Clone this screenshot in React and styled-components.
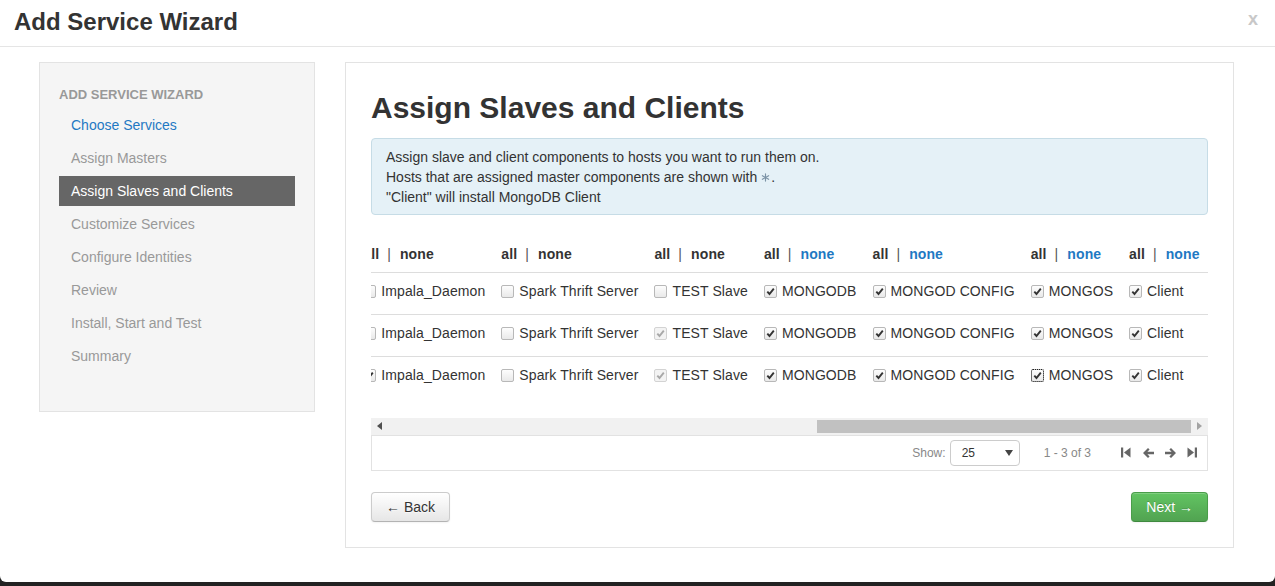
import React, { useLayoutEffect, useRef, useState } from 'react';
import styled, { createGlobalStyle } from 'styled-components';

const GlobalStyle = createGlobalStyle`
  html, body {
    margin: 0;
    padding: 0;
    height: 100%;
    background: #222;
  }
  body {
    font-family: "Liberation Sans", Arial, sans-serif;
    font-size: 14px;
    color: #333;
  }
`;

const Modal = styled.div`
  height: 582px;
  background: #fff;
  border-radius: 0 0 6px 6px;
  overflow: hidden;
`;

const ModalHeader = styled.div`
  height: 47px;
  box-sizing: border-box;
  display: flex;
  align-items: center;
  justify-content: space-between;
  padding: 0 17px 3px 14px;
  border-bottom: 1px solid #e5e5e5;
`;

const ModalTitle = styled.h3`
  margin: 0;
  font-size: 24px;
  line-height: 30px;
  font-weight: bold;
  color: #333;
`;

const Close = styled.span`
  font-size: 18px;
  font-weight: bold;
  line-height: 1;
  color: #c8c8c8;
  margin-bottom: 5px;
  cursor: pointer;
`;

const ModalBody = styled.div`
  display: grid;
  grid-template-columns: 276px minmax(0, 1fr);
  column-gap: 30px;
  align-items: start;
  padding: 15px 41px 0 39px;
`;

const Sidebar = styled.div`
  height: 350px;
  box-sizing: border-box;
  background: #f5f5f5;
  border: 1px solid #e3e3e3;
  padding: 22px 19px 0;
`;

const SidebarHeader = styled.div`
  font-size: 13px;
  font-weight: bold;
  line-height: 20px;
  color: #999;
  text-transform: uppercase;
  margin-bottom: 5px;
`;

const NavList = styled.div`
  display: flex;
  flex-direction: column;
  gap: 3px;
`;

const NavItem = styled.div`
  height: 30px;
  line-height: 30px;
  padding: 0 12px;
  font-size: 14px;
  color: ${(p) => (p.$active ? '#fff' : p.$done ? '#1f79c3' : '#999')};
  background: ${(p) => (p.$active ? '#666' : 'transparent')};
  cursor: ${(p) => (p.$done ? 'pointer' : 'default')};
`;

const Main = styled.div`
  min-width: 0;
  border: 1px solid #e3e3e3;
  padding: 25px;
`;

const PageTitle = styled.h2`
  margin: 0 0 10px;
  font-size: 30px;
  line-height: 40px;
  font-weight: bold;
  color: #333;
`;

const Alert = styled.div`
  background: #e5f1f7;
  border: 1px solid #c6dce6;
  border-radius: 4px;
  padding: 8px 14px 7px;
  line-height: 20px;
  color: #333;
  margin-bottom: 20px;
`;

const Scroller = styled.div`
  overflow: hidden;
`;

const Table = styled.table`
  border-collapse: collapse;
  white-space: nowrap;
  letter-spacing: 0.1px;
`;

const Th = styled.th`
  height: 37px;
  padding: 0 8px;
  text-align: left;
  vertical-align: middle;
  font-weight: bold;
  line-height: 20px;
`;

const Td = styled.td`
  height: 42px;
  box-sizing: border-box;
  border-top: 1px solid #ddd;
  padding: 0 8px 5px;
  line-height: 20px;
  vertical-align: middle;
`;

const HeadLink = styled.span`
  color: ${(p) => (p.$link ? '#1f79c3' : '#333')};
  cursor: ${(p) => (p.$link ? 'pointer' : 'default')};
`;

const Sep = styled.span`
  font-weight: normal;
  color: #555;
  margin: 0 9px 0 8px;
`;

const CheckLabel = styled.label`
  display: flex;
  align-items: center;
  height: 20px;
  gap: 5px;
  color: #333;
`;

const Box = styled.span`
  width: 13px;
  height: 13px;
  box-sizing: border-box;
  flex-shrink: 0;
  display: inline-flex;
  align-items: center;
  justify-content: center;
  border: 1px solid ${(p) => (p.$disabled ? '#d3d3d3' : '#b8b8b8')};
  border-radius: 2px;
  background: ${(p) => (p.$disabled ? '#f3f3f3' : 'linear-gradient(#fdfdfd, #e9e9e9)')};
  outline: ${(p) => (p.$focus ? '1px dotted #222' : 'none')};
  outline-offset: -1px;
`;

const ScrollBar = styled.div`
  display: flex;
  height: 17px;
  background: #f1f1f1;
  margin-top: 19px;
`;

const ScrollArrow = styled.div`
  width: 17px;
  display: flex;
  align-items: center;
  justify-content: center;
`;

const ScrollTrack = styled.div`
  flex: 1;
  display: flex;
  align-items: center;
  justify-content: flex-end;
`;

const ScrollThumb = styled.div`
  height: 13px;
  background: #c1c1c1;
`;

const Footer = styled.div`
  height: 36px;
  box-sizing: border-box;
  border: 1px solid #e2e2e2;
  display: flex;
  align-items: center;
  justify-content: flex-end;
  padding-right: 9px;
  font-size: 12px;
  color: #888;
`;

const ShowLabel = styled.span`
  margin-right: 4px;
`;

const Select = styled.div`
  width: 70px;
  height: 26px;
  box-sizing: border-box;
  border: 1px solid #ccc;
  border-radius: 4px;
  display: flex;
  align-items: center;
  justify-content: space-between;
  padding: 0 6px 0 11px;
  color: #333;
  font-size: 12px;
  background: #fff;
`;

const Range = styled.span`
  margin: 0 29px 0 24px;
`;

const PagerIcons = styled.div`
  display: flex;
  gap: 10px;
`;

const PagerIcon = styled.span`
  width: 12px;
  height: 12px;
  display: inline-flex;
  align-items: center;
  justify-content: center;
  color: #666;
  cursor: pointer;
`;

const Actions = styled.div`
  display: flex;
  justify-content: space-between;
  margin-top: 21px;
`;

const Button = styled.button`
  height: 30px;
  padding: 0 14px;
  font-family: "Liberation Sans", Arial, sans-serif;
  font-size: 14px;
  border-radius: 4px;
  cursor: pointer;
  border: 1px solid ${(p) => (p.$success ? '#4a9d4a' : '#ccc')};
  border-bottom-color: ${(p) => (p.$success ? '#3f8a3f' : '#b3b3b3')};
  color: ${(p) => (p.$success ? '#fff' : '#333')};
  background: ${(p) =>
    p.$success ? 'linear-gradient(#62c462, #51a351)' : 'linear-gradient(#fff, #e6e6e6)'};
  text-shadow: ${(p) => (p.$success ? '0 -1px 0 rgba(0,0,0,0.2)' : '0 1px 1px rgba(255,255,255,0.75)')};
  box-shadow: inset 0 1px 0 rgba(255, 255, 255, 0.2), 0 1px 2px rgba(0, 0, 0, 0.05);
`;

const steps = [
  'Choose Services',
  'Assign Masters',
  'Assign Slaves and Clients',
  'Customize Services',
  'Configure Identities',
  'Review',
  'Install, Start and Test',
  'Summary',
];

const hosts = ['c6401.ambari.apache.org', 'c6402.ambari.apache.org', 'c6403.ambari.apache.org'];

// c = checked, d = checked + disabled, u = unchecked, f = checked with focus
const columns = [
  { name: 'DataNode', link: true, cells: ['c', 'c', 'c'] },
  { name: 'NodeManager', link: true, cells: ['c', 'c', 'c'] },
  { name: 'RegionServer', link: true, cells: ['u', 'c', 'c'] },
  { name: 'NFSGateway', link: false, cells: ['u', 'u', 'u'] },
  { name: 'Supervisor', link: true, cells: ['c', 'u', 'u'] },
  { name: 'Flume', link: false, cells: ['u', 'u', 'u'] },
  { name: 'Kafka Broker', link: true, cells: ['u', 'u', 'c'] },
  { name: 'Impala_Daemon', link: false, cells: ['u', 'u', 'c'] },
  { name: 'Spark Thrift Server', link: false, cells: ['u', 'u', 'u'] },
  { name: 'TEST Slave', link: false, cells: ['u', 'd', 'd'] },
  { name: 'MONGODB', link: true, cells: ['c', 'c', 'c'] },
  { name: 'MONGOD CONFIG', link: true, cells: ['c', 'c', 'c'] },
  { name: 'MONGOS', link: true, cells: ['c', 'c', 'f'] },
  { name: 'Client', link: true, cells: ['c', 'c', 'c'] },
];

const Check = ({ state }) => {
  const checked = state !== 'u';
  const disabled = state === 'd';
  return (
    <Box $disabled={disabled} $focus={state === 'f'}>
      {checked && (
        <svg width="9" height="9" viewBox="0 0 9 9">
          <path
            d="M1.3 4.6 L3.5 7 L7.8 1.6"
            fill="none"
            stroke={disabled ? '#a8a8a8' : '#333'}
            strokeWidth="1.9"
          />
        </svg>
      )}
    </Box>
  );
};

const Asterisk = () => (
  <svg width="9" height="9" viewBox="0 0 10 10" style={{ margin: '0 1px 0 4px' }}>
    <g stroke="#7c93a6" strokeWidth="1.3" strokeLinecap="round">
      <line x1="5" y1="1" x2="5" y2="9" />
      <line x1="1.5" y1="3" x2="8.5" y2="7" />
      <line x1="1.5" y1="7" x2="8.5" y2="3" />
    </g>
  </svg>
);

const Tri = ({ dir, color }) => (
  <svg width="5" height="8" viewBox="0 0 5 8">
    <polygon points={dir === 'left' ? '5,0 0,4 5,8' : '0,0 5,4 0,8'} fill={color} />
  </svg>
);

const FirstIcon = () => (
  <svg width="10" height="11" viewBox="0 0 10 11" fill="currentColor">
    <rect x="0" y="0.5" width="2.2" height="10" />
    <polygon points="9.5,0.5 3,5.5 9.5,10.5" />
  </svg>
);

const LastIcon = () => (
  <svg width="10" height="11" viewBox="0 0 10 11" fill="currentColor">
    <rect x="7.8" y="0.5" width="2.2" height="10" />
    <polygon points="0.5,0.5 7,5.5 0.5,10.5" />
  </svg>
);

const PrevIcon = () => (
  <svg width="11" height="10" viewBox="0 0 11 10" fill="currentColor">
    <polygon points="0,5 5,0 6.6,1.6 4.4,3.8 11,3.8 11,6.2 4.4,6.2 6.6,8.4 5,10" />
  </svg>
);

const NextIcon = () => (
  <svg width="11" height="10" viewBox="0 0 11 10" fill="currentColor">
    <polygon points="11,5 6,0 4.4,1.6 6.6,3.8 0,3.8 0,6.2 6.6,6.2 4.4,8.4 6,10" />
  </svg>
);

export default function App() {
  const scrollRef = useRef(null);
  const [thumb, setThumb] = useState(47);

  useLayoutEffect(() => {
    const el = scrollRef.current;
    if (!el) return;
    el.scrollLeft = el.scrollWidth - el.clientWidth;
    setThumb((el.clientWidth / el.scrollWidth) * 100);
  }, []);

  return (
    <>
      <GlobalStyle />
      <Modal>
        <ModalHeader>
          <ModalTitle>Add Service Wizard</ModalTitle>
          <Close>x</Close>
        </ModalHeader>
        <ModalBody>
          <Sidebar>
            <SidebarHeader>Add Service Wizard</SidebarHeader>
            <NavList>
              {steps.map((s, i) => (
                <NavItem key={s} $active={i === 2} $done={i === 0}>
                  {s}
                </NavItem>
              ))}
            </NavList>
          </Sidebar>

          <Main>
            <PageTitle>Assign Slaves and Clients</PageTitle>
            <Alert>
              Assign slave and client components to hosts you want to run them on.
              <br />
              Hosts that are assigned master components are shown with
              <Asterisk />.
              <br />
              "Client" will install MongoDB Client
            </Alert>

            <Scroller ref={scrollRef}>
              <Table>
                <thead>
                  <tr>
                    <Th>Host</Th>
                    {columns.map((c) => (
                      <Th key={c.name}>
                        <HeadLink>all</HeadLink>
                        <Sep>|</Sep>
                        <HeadLink $link={c.link}>none</HeadLink>
                      </Th>
                    ))}
                  </tr>
                </thead>
                <tbody>
                  {hosts.map((h, r) => (
                    <tr key={h}>
                      <Td>{h}</Td>
                      {columns.map((c) => (
                        <Td key={c.name}>
                          <CheckLabel>
                            <Check state={c.cells[r]} />
                            {c.name}
                          </CheckLabel>
                        </Td>
                      ))}
                    </tr>
                  ))}
                </tbody>
              </Table>
            </Scroller>

            <ScrollBar>
              <ScrollArrow>
                <Tri dir="left" color="#505050" />
              </ScrollArrow>
              <ScrollTrack>
                <ScrollThumb style={{ width: `${thumb}%` }} />
              </ScrollTrack>
              <ScrollArrow>
                <Tri dir="right" color="#a3a3a3" />
              </ScrollArrow>
            </ScrollBar>

            <Footer>
              <ShowLabel>Show:</ShowLabel>
              <Select>
                <span>25</span>
                <svg width="8" height="6" viewBox="0 0 8 6">
                  <polygon points="0,0 8,0 4,6" fill="#444" />
                </svg>
              </Select>
              <Range>1 - 3 of 3</Range>
              <PagerIcons>
                <PagerIcon><FirstIcon /></PagerIcon>
                <PagerIcon><PrevIcon /></PagerIcon>
                <PagerIcon><NextIcon /></PagerIcon>
                <PagerIcon><LastIcon /></PagerIcon>
              </PagerIcons>
            </Footer>

            <Actions>
              <Button>← Back</Button>
              <Button $success>Next →</Button>
            </Actions>
          </Main>
        </ModalBody>
      </Modal>
    </>
  );
}
